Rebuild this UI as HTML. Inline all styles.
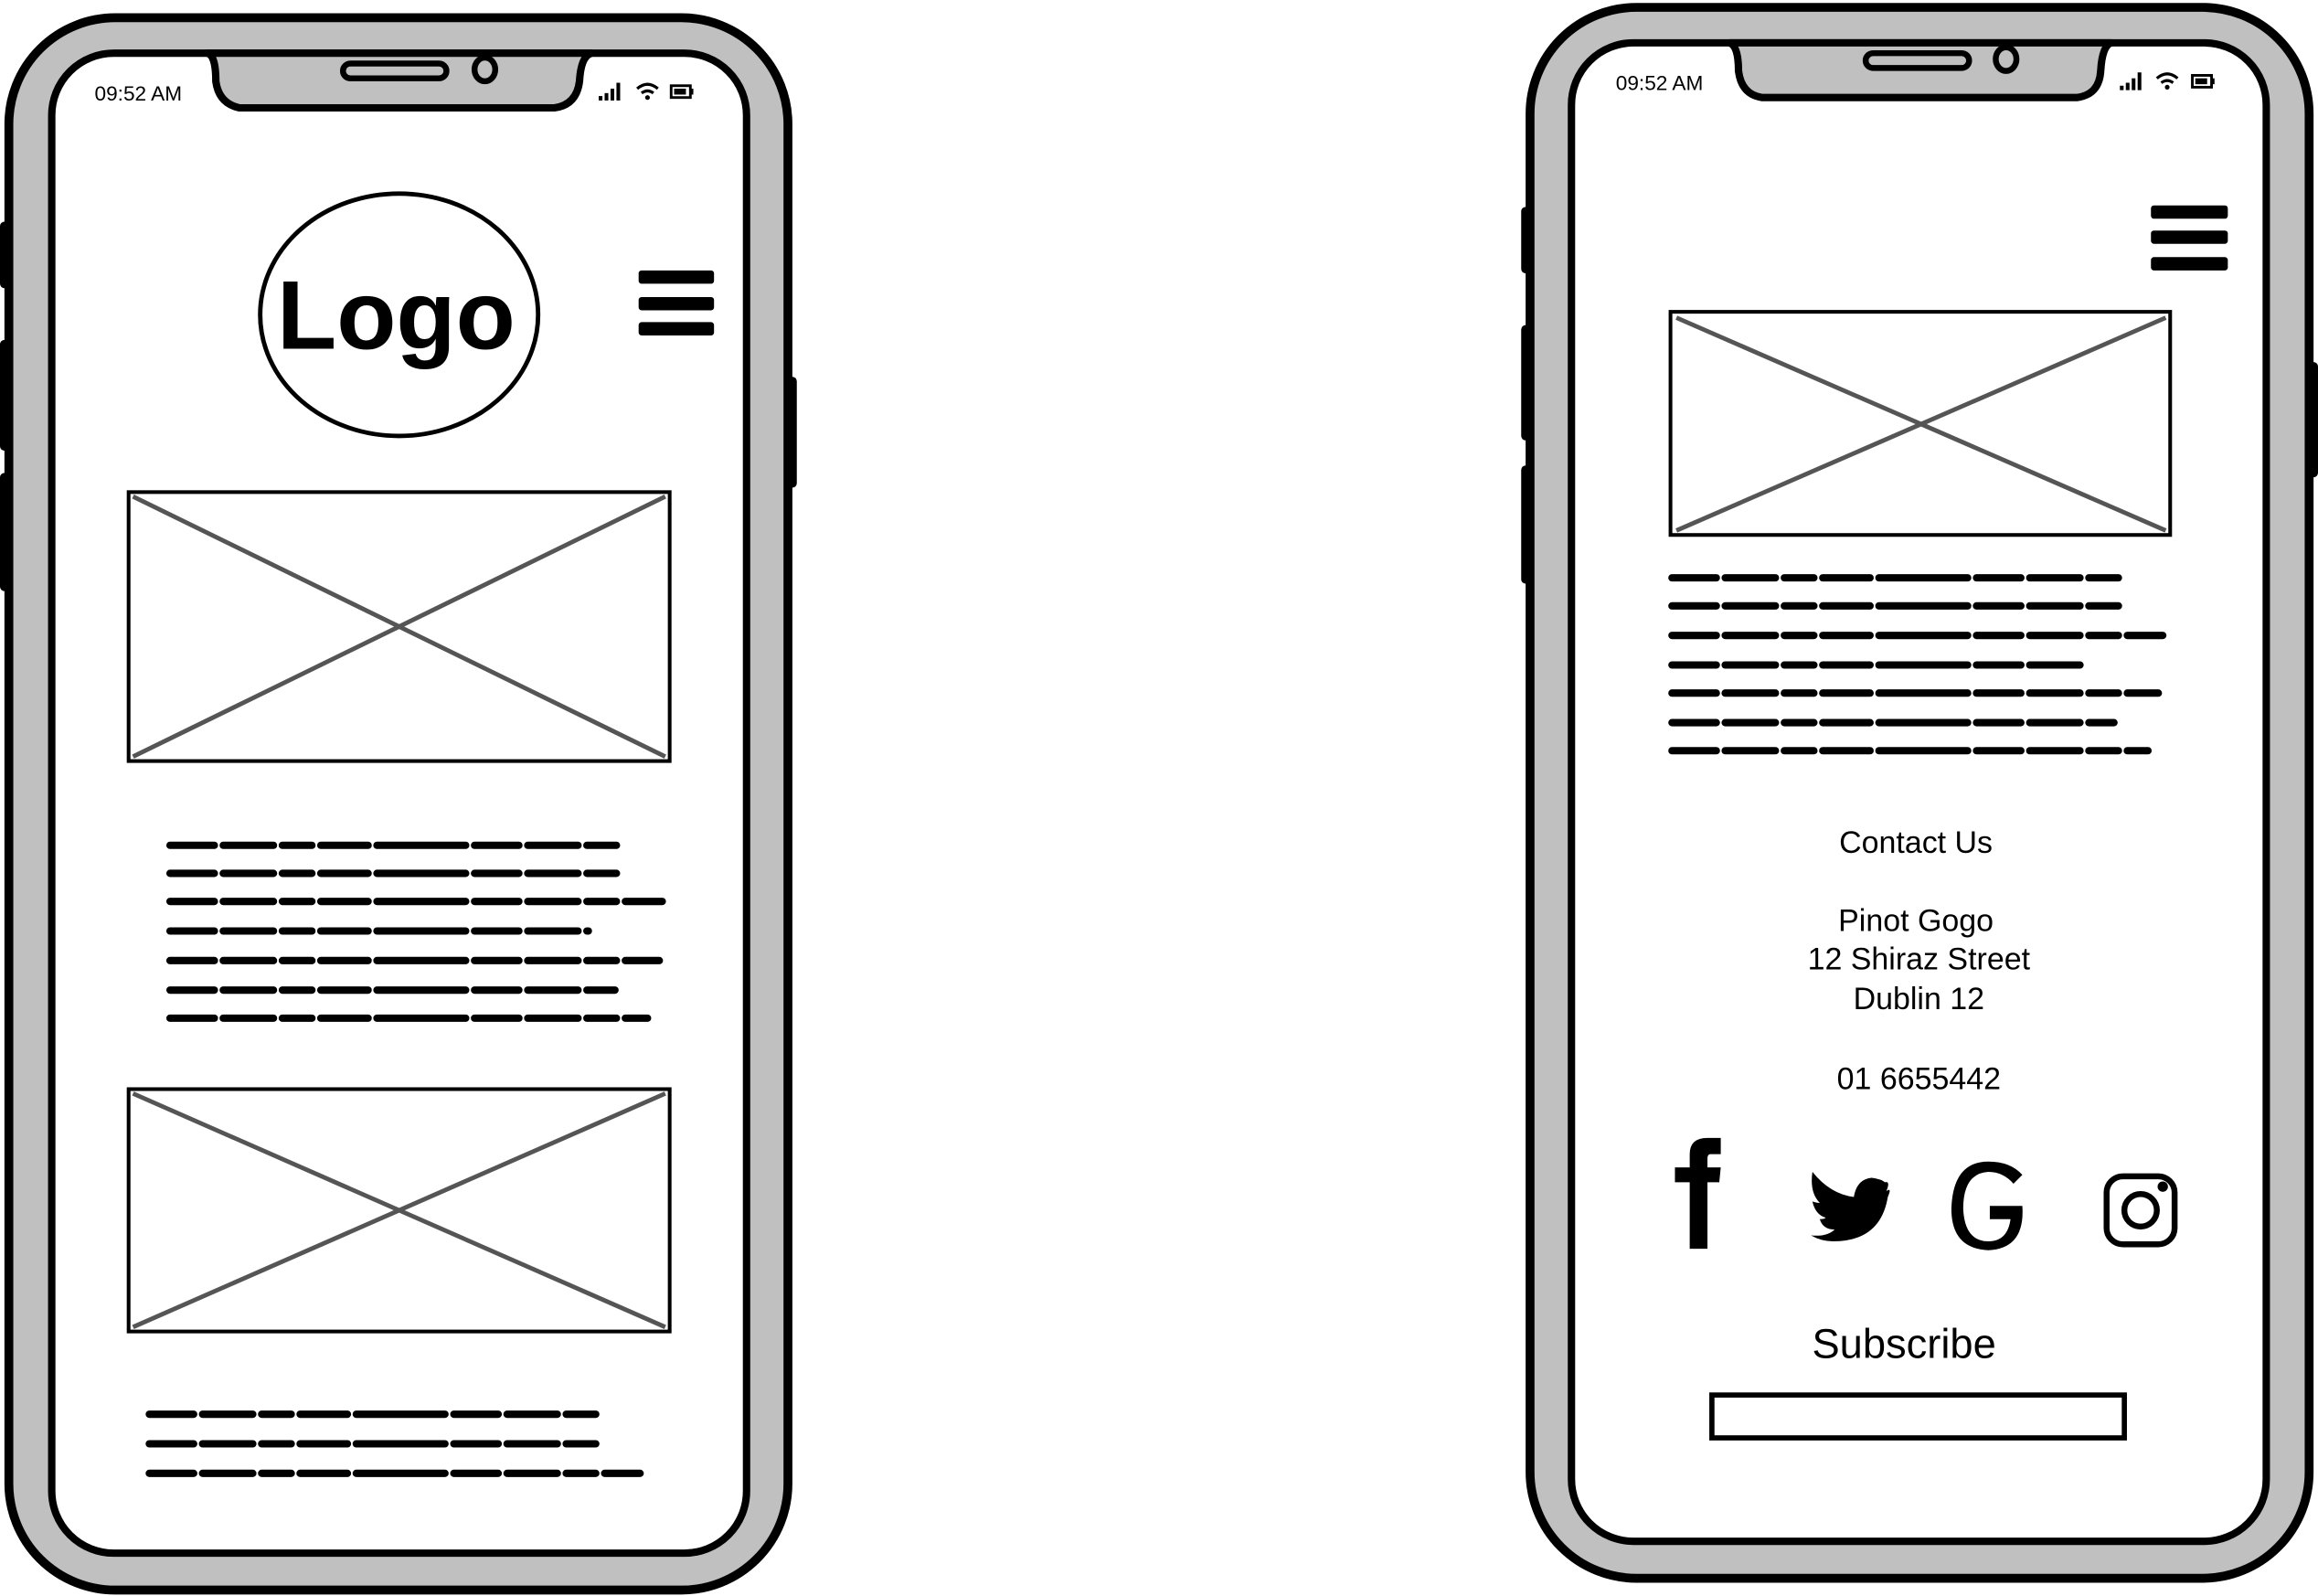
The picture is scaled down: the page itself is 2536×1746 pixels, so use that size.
<!DOCTYPE html>
<html><head><meta charset="utf-8"><style>
html,body{margin:0;padding:0;background:#fff;}
svg{display:block}
text{font-family:"Liberation Sans","DejaVu Sans",sans-serif;fill:#000}
</style></head><body>
<svg width="2536" height="1746" viewBox="0 0 1568 1080" preserveAspectRatio="none" xmlns="http://www.w3.org/2000/svg">
<rect width="1568" height="1080" fill="#fff"/>
<!-- LEFT PHONE -->
<rect x="0" y="150" width="8" height="45" rx="3" fill="#000"/>
<rect x="0" y="230" width="8" height="75" rx="3" fill="#000"/>
<rect x="0" y="320" width="8" height="80" rx="3" fill="#000"/>
<rect x="530" y="255" width="9" height="75" rx="3" fill="#000"/>
<rect x="6" y="12" width="527" height="1064" rx="72" fill="#c0c0c0" stroke="#000" stroke-width="6"/>
<rect x="35" y="36" width="470" height="1015" rx="42" fill="#fff" stroke="#000" stroke-width="5"/>
<path d="M140 36 Q146 37 146 55 Q148 70 162 73 L375 73 Q390 71 392 55 Q393 38 400 36 Z" fill="#c0c0c0" stroke="#000" stroke-width="5" stroke-linejoin="round"/>
<rect x="232" y="43" width="70" height="10" rx="5" fill="#c0c0c0" stroke="#000" stroke-width="4"/>
<ellipse cx="328" cy="47" rx="7" ry="8" fill="#c0c0c0" stroke="#000" stroke-width="4"/>
<text x="64" y="68" font-size="14">09:52 AM</text>
<g fill="#000"><rect x="405" y="65" width="2.5" height="3"/><rect x="409" y="63" width="2.5" height="5"/><rect x="413" y="60" width="2.5" height="8"/><rect x="417" y="56" width="2.5" height="12"/></g>
<path d="M431 60 Q438 54 445 60 M434 63 Q438 60 442 63" stroke="#000" stroke-width="2" fill="none"/><circle cx="438" cy="66" r="1.6"/>
<rect x="454" y="58" width="13" height="8" fill="none" stroke="#000" stroke-width="1.8"/><rect x="456" y="60" width="8" height="4"/><rect x="467" y="60" width="2" height="4"/>
<ellipse cx="270" cy="213" rx="94" ry="82" fill="#fff" stroke="#000" stroke-width="3"/>
<text x="268" y="236" font-size="66" font-weight="bold" text-anchor="middle">Logo</text>
<g fill="#000"><rect x="432" y="183" width="51" height="9" rx="2"/><rect x="432" y="201" width="51" height="9" rx="2"/><rect x="432" y="218" width="51" height="9" rx="2"/></g>
<g stroke="#555" stroke-width="3"><line x1="90" y1="336" x2="450" y2="512"/><line x1="90" y1="512" x2="450" y2="336"/>
<line x1="90" y1="740" x2="450" y2="898"/><line x1="90" y1="898" x2="450" y2="740"/></g>
<rect x="87" y="333" width="366" height="182" fill="none" stroke="#000" stroke-width="2.5"/>
<rect x="87" y="737" width="366" height="164" fill="none" stroke="#000" stroke-width="2.5"/>
<!-- RIGHT PHONE -->
<rect x="1029" y="140" width="8" height="45" rx="3" fill="#000"/>
<rect x="1029" y="220" width="8" height="78" rx="3" fill="#000"/>
<rect x="1029" y="315" width="8" height="80" rx="3" fill="#000"/>
<rect x="1560" y="245" width="8" height="78" rx="3" fill="#000"/>
<rect x="1035" y="5" width="527" height="1063" rx="72" fill="#c0c0c0" stroke="#000" stroke-width="6"/>
<rect x="1063" y="29" width="470" height="1014" rx="42" fill="#fff" stroke="#000" stroke-width="5"/>
<path d="M1170 29 Q1176 31 1176 48 Q1178 64 1192 66 L1405 66 Q1420 64 1421 48 Q1422 31 1428 29 Z" fill="#c0c0c0" stroke="#000" stroke-width="5" stroke-linejoin="round"/>
<rect x="1262" y="36" width="70" height="10" rx="5" fill="#c0c0c0" stroke="#000" stroke-width="4"/>
<ellipse cx="1357" cy="40" rx="7" ry="8" fill="#c0c0c0" stroke="#000" stroke-width="4"/>
<text x="1093" y="61" font-size="14">09:52 AM</text>
<g fill="#000"><rect x="1434" y="58" width="2.5" height="3"/><rect x="1438" y="56" width="2.5" height="5"/><rect x="1442" y="53" width="2.5" height="8"/><rect x="1446" y="49" width="2.5" height="12"/></g>
<path d="M1459 53 Q1466 47 1473 53 M1462 56 Q1466 53 1470 56" stroke="#000" stroke-width="2" fill="none"/><circle cx="1466" cy="59" r="1.6"/>
<rect x="1483" y="51" width="13" height="8" fill="none" stroke="#000" stroke-width="1.8"/><rect x="1485" y="53" width="8" height="4"/><rect x="1496" y="53" width="2" height="4"/>
<g fill="#000"><rect x="1455" y="139" width="52" height="9" rx="2"/><rect x="1455" y="156" width="52" height="9" rx="2"/><rect x="1455" y="174" width="52" height="9" rx="2"/></g>
<g stroke="#555" stroke-width="3"><line x1="1134" y1="215" x2="1465" y2="359"/><line x1="1134" y1="359" x2="1465" y2="215"/></g>
<rect x="1130" y="211" width="338" height="151" fill="none" stroke="#000" stroke-width="2.5"/>
<g font-size="21" text-anchor="middle">
<text x="1296" y="577">Contact Us</text>
<text x="1296" y="630">Pinot Gogo</text>
<text x="1298" y="656">12 Shiraz Street</text>
<text x="1298" y="683">Dublin 12</text>
<text x="1298" y="737">01 6655442</text>
</g>
<text x="1288" y="919" font-size="28" text-anchor="middle">Subscribe</text>
<path d="M1143 845 L1143 800 L1133 800 L1133 790 L1143 790 L1143 781 Q1143 770 1155 770 L1164 770 L1164 781 L1157 781 Q1155 781 1155 784 L1155 790 L1164 790 L1163 800 L1155 800 L1155 845 Z" fill="#000"/>
<path d="M1226 793 Q1238 808 1254 810 Q1256 798 1266 797 Q1273 798 1275 800 Q1279 799 1276 806 Q1280 803 1277 810 Q1272 840 1240 840 Q1232 840 1225 836 Q1236 837 1241 832 Q1233 832 1231 825 Q1234 825 1235 824 Q1228 822 1226 813 Q1229 814 1231 814 Q1224 807 1226 793 Z" fill="#000"/>
<path d="M1362 801 Q1355 793 1345 793 Q1328 794 1328 818 Q1329 840 1345 840 Q1358 840 1360 825 L1346 825 L1346 816 L1368 816 Q1370 845 1345 846 Q1320 845 1320 818 Q1321 786 1345 786 Q1360 786 1368 795 Z" fill="#000"/>
<rect x="1425" y="796" width="46" height="46" rx="11" fill="none" stroke="#000" stroke-width="4"/>
<circle cx="1448" cy="819" r="11" fill="none" stroke="#000" stroke-width="4"/>
<circle cx="1463" cy="803" r="3.5" fill="#000"/>
<rect x="1158" y="944" width="279" height="29" fill="none" stroke="#000" stroke-width="3.5"/>
<!-- scribbles -->
<g stroke="#000" stroke-width="5" stroke-dasharray="30 6 34 6 20 6 32 6 60 6" stroke-linecap="round">
<line x1="115" y1="572" x2="418" y2="572"/><line x1="115" y1="591" x2="422" y2="591"/><line x1="115" y1="610" x2="448" y2="610"/>
<line x1="115" y1="630" x2="398" y2="630"/><line x1="115" y1="650" x2="446" y2="650"/><line x1="115" y1="670" x2="416" y2="670"/>
<line x1="115" y1="689" x2="438" y2="689"/>
<line x1="101" y1="957" x2="404" y2="957"/><line x1="101" y1="977" x2="407" y2="977"/><line x1="101" y1="997" x2="433" y2="997"/>
<line x1="1131" y1="391" x2="1433" y2="391"/><line x1="1131" y1="410" x2="1438" y2="410"/><line x1="1131" y1="430" x2="1463" y2="430"/>
<line x1="1131" y1="450" x2="1413" y2="450"/><line x1="1131" y1="469" x2="1460" y2="469"/><line x1="1131" y1="489" x2="1430" y2="489"/>
<line x1="1131" y1="508" x2="1453" y2="508"/>
</g>
</svg>
</body></html>
